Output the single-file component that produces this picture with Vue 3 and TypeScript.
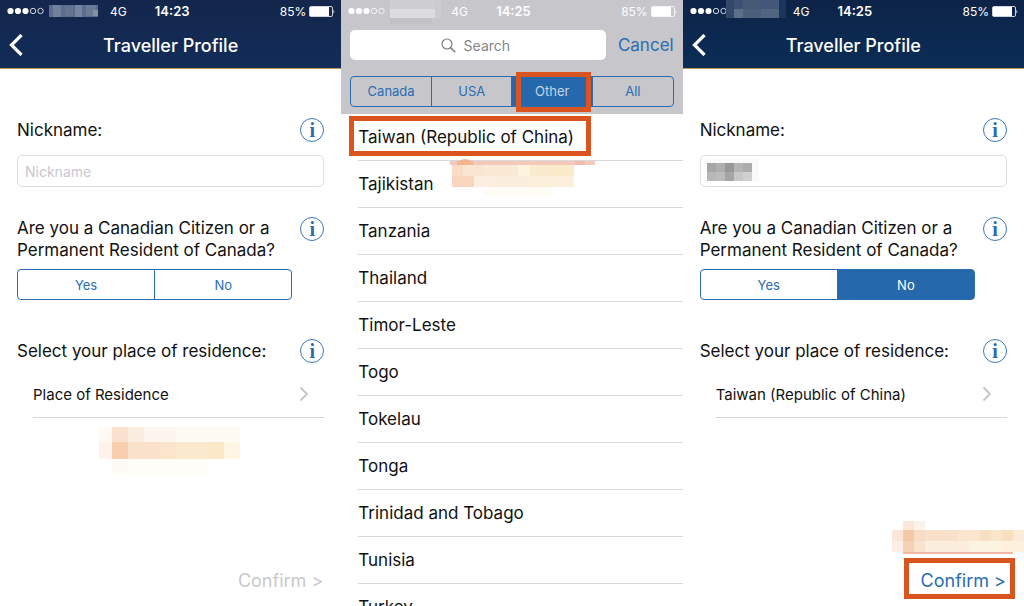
<script setup lang="ts">
import { ref } from 'vue'

type Tile = [x: number, y: number, w: number, h: number, fill: string]

interface Profile {
  id: string
  time: string
  shade: string
  nickname: Tile[]
  placeholder: string
  answer: '' | 'Yes' | 'No'
  residence: string
  ready: boolean
  carrier: Tile[]
  carrierName: string
}

const carrierA: Tile[] = [
  [0, 0, 49, 12, '#5b6c8c'], [4, 0, 8, 12, '#71809b'], [16, 1, 8, 10, '#64758f'],
  [26, 0, 7, 12, '#7584a0'], [37, 0, 10, 11, '#6b7a96'], [44, 5, 5, 6, '#8290a8'],
]
const carrierB: Tile[] = [
  [0, 0, 8, 18, '#33496a'], [8, 0, 9, 9, '#3d5272'], [8, 9, 9, 9, '#5c6e88'],
  [17, 0, 18, 9, '#465a78'], [17, 9, 18, 9, '#4b5f7c'], [35, 0, 18, 9, '#42577a'],
  [35, 9, 18, 9, '#52657f'], [53, 0, 7, 18, '#1c355c'],
]
const carrierC: Tile[] = [
  [0, 0, 51, 18, '#cccbcf'], [0, 0, 45, 9, '#cfced2'], [0, 9, 45, 9, '#dcdbde'], [0, 18, 42, 6, '#c2c1c6'],
]
const nameTiles: Tile[] = [
  [0, 0, 52, 22, '#fafafa'], [0, 4, 9, 9, '#a7a5a7'], [9, 4, 9, 9, '#b0afb0'], [18, 4, 9, 9, '#989798'],
  [27, 4, 9, 9, '#b5b4b5'], [36, 4, 9, 9, '#adacad'], [0, 13, 9, 9, '#b9b7b9'],
  [9, 13, 9, 9, '#bcbabc'], [18, 13, 9, 9, '#a6a5a6'], [27, 13, 9, 9, '#c8c7c8'], [36, 13, 9, 9, '#d2cfd2'],
]
const markA: Tile[] = [
  [0, 0, 13, 15, '#fff8f4'], [13, 0, 16, 15, '#fae1ce'], [29, 0, 16, 15, '#fcede1'], [45, 0, 32, 15, '#fdf5ee'],
  [77, 0, 64, 15, '#fefaf4'], [0, 15, 13, 17, '#fef2ea'], [13, 15, 16, 17, '#f8ceae'], [29, 15, 32, 17, '#fae1cb'],
  [61, 15, 16, 17, '#fae5cb'], [77, 15, 32, 17, '#fceacf'], [109, 15, 16, 17, '#fae8c9'], [125, 15, 16, 17, '#fef5e5'],
  [13, 32, 16, 15, '#fefaf6'], [29, 32, 80, 15, '#fffdf8'],
]
const markB: Tile[] = [
  [0, 3, 145, 4, '#f3c9bc'], [125, 3, 10, 4, '#efbdb0'], [2, 7, 11, 11, '#f8dcc7'],
  [13, 7, 21, 11, '#fae5d0'], [34, 7, 34, 11, '#fae9d4'], [68, 7, 12, 11, '#fdf3df'], [80, 7, 22, 11, '#faebcf'],
  [102, 7, 22, 11, '#faeccb'], [2, 18, 22, 11, '#f8d6bd'], [24, 18, 22, 11, '#fcefe2'],
  [46, 18, 32, 11, '#faeddb'], [78, 18, 46, 11, '#fcf0dc'], [35, 29, 66, 9, '#fffbf5'],
]
const markC: Tile[] = [
  [11, 0, 11, 9, '#fae7da'], [22, 0, 11, 9, '#fcf2ea'], [0, 9, 11, 11, '#fae6d8'], [11, 9, 11, 11, '#f4c9a5'],
  [22, 9, 11, 11, '#f8dcc5'], [33, 9, 33, 11, '#f9e0ca'], [66, 9, 22, 11, '#fae6d0'], [88, 9, 11, 11, '#f8dfc3'],
  [99, 9, 11, 11, '#fae6cd'], [110, 9, 11, 11, '#f8dfbd'], [121, 9, 11, 11, '#fbecd9'],
  [0, 20, 11, 11, '#fceee4'], [11, 20, 11, 11, '#f6d2b4'], [22, 20, 11, 11, '#fae2cf'], [33, 20, 44, 11, '#fbeedc'],
  [77, 20, 33, 11, '#fcf4e0'], [110, 20, 22, 11, '#fdf1dd'], [11, 31, 110, 2, '#edb9a5'],
]

const profiles = ref<Profile[]>([
  {
    id: 'empty', time: '14:23', shade: 'navy', nickname: [], placeholder: 'Nickname', answer: '',
    residence: 'Place of Residence', ready: false, carrier: carrierA, carrierName: 'wide',
  },
  {
    id: 'filled', time: '14:25', shade: 'deep', nickname: nameTiles, placeholder: '', answer: 'No',
    residence: 'Taiwan (Republic of China)', ready: true, carrier: carrierB, carrierName: 'tall',
  },
])

const regions = ['Canada', 'USA', 'Other', 'All']
const region = ref('Other')
const countries = [
  'Taiwan (Republic of China)', 'Tajikistan', 'Tanzania', 'Thailand', 'Timor-Leste', 'Togo',
  'Tokelau', 'Tonga', 'Trinidad and Tobago', 'Tunisia', 'Turkey',
]
</script>

<template>
  <main class="screens">
    <section v-for="p in profiles" :key="p.id" class="phone" :class="[p.id, p.shade]">
      <header class="top">
        <div class="status">
          <svg class="signal" width="37" height="8" viewBox="0 0 37 8" aria-hidden="true">
            <g fill="#fff"><circle cx="3.5" cy="4" r="3.1" /><circle cx="11" cy="4" r="3.1" /><circle cx="18.5" cy="4" r="3.1" /></g>
            <g fill="none" stroke="#fff" stroke-width=".8"><circle cx="26" cy="4" r="2.7" /><circle cx="33.5" cy="4" r="2.7" /></g>
          </svg>
          <svg class="carrier" :class="p.carrierName" aria-hidden="true">
            <rect v-for="(t, i) in p.carrier" :key="i" :x="t[0]" :y="t[1]" :width="t[2]" :height="t[3]" :fill="t[4]" />
          </svg>
          <span class="network">4G</span>
          <span class="time">{{ p.time }}</span>
          <span class="charge">85%</span>
          <svg class="battery" width="26" height="11" viewBox="0 0 26 11" aria-hidden="true">
            <rect x=".5" y=".5" width="23" height="10" rx="1.5" fill="none" stroke="#fff" stroke-opacity=".8" />
            <rect x="1" y="1" width="19" height="9" fill="#fff" /><path d="M24.5 3.5q1.5 2 0 4z" fill="#fff" />
          </svg>
        </div>
        <div class="nav">
          <button class="back" aria-label="Back">
            <svg width="14" height="22" viewBox="0 0 14 22" aria-hidden="true"><path d="M12.5 1 2.5 11l10 10" fill="none" stroke="#fff" stroke-width="3.2" /></svg>
          </button>
          <h1>Traveller Profile</h1>
        </div>
      </header>

      <form class="form" @submit.prevent>
        <div class="row">
          <label :for="'nick-' + p.id">Nickname:</label>
          <button type="button" class="info" aria-label="About nickname">i</button>
        </div>
        <div class="field">
          <input :id="'nick-' + p.id" type="text" :placeholder="p.placeholder" />
          <svg v-if="p.nickname.length" class="masked" width="52" height="24" aria-hidden="true">
            <rect v-for="(t, i) in p.nickname" :key="i" :x="t[0]" :y="t[1]" :width="t[2]" :height="t[3]" :fill="t[4]" />
          </svg>
        </div>
        <div class="row question">
          <p :id="'q-' + p.id">Are you a Canadian Citizen or a<br />Permanent Resident of Canada?</p>
          <button type="button" class="info" aria-label="About citizenship">i</button>
        </div>
        <div class="segments answer" role="group" :aria-labelledby="'q-' + p.id">
          <button type="button" :aria-pressed="p.answer === 'Yes'" @click="p.answer = 'Yes'">Yes</button>
          <button type="button" :aria-pressed="p.answer === 'No'" @click="p.answer = 'No'">No</button>
        </div>
        <div class="row residence">
          <label :for="'place-' + p.id">Select your place of residence:</label>
          <button type="button" class="info" aria-label="About residence">i</button>
        </div>
        <button :id="'place-' + p.id" type="button" class="place">
          <span>{{ p.residence }}</span>
          <svg width="10" height="16" viewBox="0 0 10 16" aria-hidden="true"><path d="m1.5 1.5 6.5 6.5-6.5 6.5" fill="none" stroke="#c4c4c9" stroke-width="1.8" /></svg>
        </button>
        <svg v-if="!p.ready" class="mark mark-a" width="142" height="47" aria-hidden="true">
          <rect v-for="(t, i) in markA" :key="i" :x="t[0]" :y="t[1]" :width="t[2]" :height="t[3]" :fill="t[4]" />
        </svg>
        <button class="confirm" :class="{ marked: p.ready }" :disabled="!p.ready">
          Confirm &gt;
          <svg v-if="p.ready" class="mark mark-c" width="132" height="34" aria-hidden="true">
            <rect v-for="(t, i) in markC" :key="i" :x="t[0]" :y="t[1]" :width="t[2]" :height="t[3]" :fill="t[4]" />
          </svg>
        </button>
      </form>
    </section>

    <section class="phone picker">
      <header class="finder">
        <div class="status">
          <svg class="signal" width="37" height="8" viewBox="0 0 37 8" aria-hidden="true">
            <g fill="#fff"><circle cx="3.5" cy="4" r="3.1" /><circle cx="11" cy="4" r="3.1" /><circle cx="18.5" cy="4" r="3.1" /></g>
            <g fill="none" stroke="#fff" stroke-width=".8"><circle cx="26" cy="4" r="2.7" /><circle cx="33.5" cy="4" r="2.7" /></g>
          </svg>
          <svg class="carrier pale" aria-hidden="true">
            <rect v-for="(t, i) in carrierC" :key="i" :x="t[0]" :y="t[1]" :width="t[2]" :height="t[3]" :fill="t[4]" />
          </svg>
          <span class="network">4G</span>
          <span class="time">14:25</span>
          <span class="charge">85%</span>
          <svg class="battery" width="26" height="11" viewBox="0 0 26 11" aria-hidden="true">
            <rect x=".5" y=".5" width="23" height="10" rx="1.5" fill="none" stroke="#fff" stroke-opacity=".8" />
            <rect x="1" y="1" width="19" height="9" fill="#fff" /><path d="M24.5 3.5q1.5 2 0 4z" fill="#fff" />
          </svg>
        </div>
        <div class="searchbar">
          <label class="search">
            <svg width="15" height="15" viewBox="0 0 15 15" aria-hidden="true"><circle cx="6" cy="6" r="5" fill="none" stroke="#7d7d82" stroke-width="1.2" /><path d="m9.6 9.6 4.6 4.6" stroke="#7d7d82" stroke-width="1.5" /></svg>
            <input type="text" role="searchbox" placeholder="Search" aria-label="Search" />
          </label>
          <button class="cancel">Cancel</button>
        </div>
        <div class="segments regions" role="group" aria-label="Region">
          <button v-for="r in regions" :key="r" :class="{ marked: r === 'Other' }" :aria-pressed="region === r" @click="region = r">{{ r }}</button>
        </div>
      </header>
      <ul class="list">
        <li v-for="(c, i) in countries" :key="c">
          <button :class="{ marked: i === 0 }">{{ c }}</button>
          <svg v-if="i === 1" class="mark mark-b" width="146" height="38" aria-hidden="true">
            <path d="M7 4q8-6 16 0v3H7z" fill="#f2b690" />
            <rect v-for="(t, k) in markB" :key="k" :x="t[0]" :y="t[1]" :width="t[2]" :height="t[3]" :fill="t[4]" />
            <rect x="7" y="3" width="16" height="4" fill="#f2b690" />
          </svg>
        </li>
      </ul>
    </section>
  </main>
</template>

<style>
body { margin: 0; }
</style>

<style scoped>
* { box-sizing: border-box; }
.screens {
  display: grid;
  grid-template-columns: repeat(3, minmax(0, 1fr));
  height: 100vh;
  overflow: hidden;
  background: #fff;
  color: #111;
  font-family: Inter, "Liberation Sans", sans-serif;
  font-size: 17px;
}
button, input { font: inherit; color: inherit; margin: 0; padding: 0; border: 0; background: none; }
h1, p, ul { margin: 0; padding: 0; }
.phone { display: flex; flex-direction: column; min-width: 0; min-height: 0; }
.empty { order: 1; }
.picker { order: 2; overflow: hidden; }
.filled { order: 3; }

.top { border-bottom: 1px solid #c09a4e; color: #fff; background: linear-gradient(#14264b, #112d59); }
.deep .top { background: linear-gradient(#0d2347, #0b2d57); }
.status { display: flex; align-items: center; height: 22px; padding: 0 6px 0 7px; font-size: 12px; position: relative; color: #fff; }
.network { margin-left: 12px; }
.time { position: absolute; left: 0; right: 0; padding-left: 3px; text-align: center; font-weight: 600; font-size: 13px; }
.charge { margin-left: auto; margin-right: 3px; }
.carrier { margin-left: 5px; width: 49px; height: 12px; }
.carrier.tall { width: 60px; height: 18px; margin: 0 -5px 0 -1px; align-self: flex-start; }
.carrier.pale { width: 51px; height: 24px; align-self: flex-start; margin-right: -2px; }
.nav { display: grid; grid-template-columns: 40px 1fr 40px; align-items: center; height: 46px; }
.nav h1 { font-size: 18px; font-weight: 500; text-align: center; white-space: nowrap; }
.back { display: flex; padding-left: 9px; }

.form { display: flex; flex-direction: column; flex: 1; padding: 49px 17px 8px; position: relative; }
.row { display: flex; justify-content: space-between; align-items: center; min-height: 24px; line-height: 22px; }
.info {
  flex: none; width: 24px; height: 24px; border: 1px solid #3a78bb; border-radius: 50%;
  color: #2a6cb2; font: bold 20px/20px "Liberation Serif", serif; text-align: center;
}
.field { position: relative; margin-top: 13px; }
.field input { display: block; width: 100%; height: 32px; padding: 0 7px; border: 1px solid #dededf; border-radius: 5px; font-size: 14px; }
.field input::placeholder { color: #c7c7cd; opacity: 1; }
.masked { position: absolute; left: 7px; top: 4px; }
.question { align-items: flex-start; margin-top: 30px; }
.segments { display: flex; border: 1px solid #2a6cb2; border-radius: 4px; height: 31px; color: #2a6cb2; font-size: 13px; }
.segments button { flex: 1; position: relative; }
.segments button + button { border-left: 1px solid #2a6cb2; }
.segments button[aria-pressed="true"] { background: #2568ab; color: #fff; }
.answer { margin: 8px 32px 0 0; }
.residence { margin-top: 39px; }
.place {
  display: flex; justify-content: space-between; align-items: center; height: 45px; margin: 10px 0 0 16px; padding: 0 15px 2px 0;
  border-bottom: 1px solid #d6d6d8; font-size: 15px; text-align: left;
}
.confirm { position: relative; align-self: flex-end; margin-top: auto; height: 36px; padding-right: 1px; font-size: 18px; color: #2a6cb2; }
.confirm:disabled { color: #c9c9cb; }

.mark { position: absolute; pointer-events: none; }
.mark-a { left: 99px; top: 358px; }
.mark-b { left: 92px; top: -3px; }
.mark-c { right: -17px; top: -41px; }
.marked::after { content: ""; position: absolute; border: 5px solid #d9541e; pointer-events: none; z-index: 1; }
.confirm.marked::after { inset: -4px -8px -1px -17px; }
.regions .marked::after { inset: -5px 1px -6px 4px; }
.list .marked::after { inset: 2px 92px 4px -9px; }

.finder { background: #c7c6cb; padding-bottom: 7px; flex: none; }
.searchbar { display: flex; align-items: center; gap: 12px; padding: 0 9px; margin-top: 8px; }
.search { display: flex; flex: 1; align-items: center; justify-content: center; gap: 8px; height: 30px; border-radius: 5px; background: #fff; }
.search input { width: 52px; font-size: 14px; outline: 0; }
.search input::placeholder { color: #85858a; opacity: 1; }
.cancel { color: #2a6cb2; font-size: 17px; }
.regions { margin: 16px 9px 0; }
.regions button { padding-bottom: 1px; }
.regions button[aria-pressed="true"] { color: #c6d3e4; }
.list { list-style: none; padding-left: 17px; }
.list li { position: relative; height: 47px; border-bottom: 1px solid #d9d9db; }
.list button { position: relative; width: 100%; height: 46px; text-align: left; }
</style>
